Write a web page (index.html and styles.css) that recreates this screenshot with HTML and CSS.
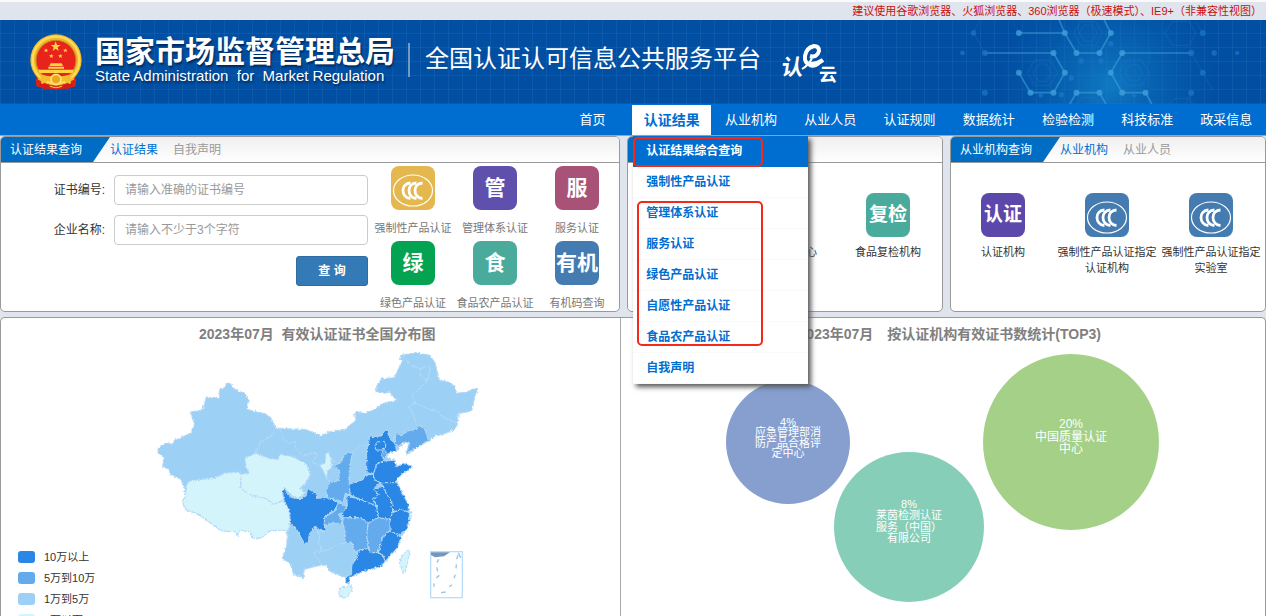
FILE: index.html
```html
<!DOCTYPE html>
<html lang="zh-CN">
<head>
<meta charset="utf-8">
<title>全国认证认可信息公共服务平台</title>
<link rel="stylesheet" href="styles.css">
</head>
<body>
<svg class="defs" aria-hidden="true">
  <symbol id="ccc" viewBox="0 0 44 44">
    <ellipse cx="22" cy="24.500" rx="19.500" ry="15.500" fill="none" stroke="#fff" stroke-width="1.200"/>
    <g fill="none" stroke="#fff" stroke-width="2.800">
      <path d="M19.500 17C9.500 17.500 9.500 31.500 19.500 32.500"/>
      <path d="M25.500 17C15.500 17.500 15.500 31.500 25.500 32.500"/>
      <path d="M31.500 17C21.500 17.500 21.500 31.500 31.500 32.500"/>
    </g>
  </symbol>
</svg>

<p class="notice">建议使用谷歌浏览器、火狐浏览器、360浏览器（极速模式）、IE9+（非兼容性视图）</p>

<header class="banner">
  <svg class="emblem" viewBox="0 0 156 168" aria-hidden="true">
    <path d="M20 118L18 155L45 166L78 158L112 166L138 155L136 118Z" fill="#d51a1c"/>
    <circle cx="78" cy="78" r="77" fill="#eeb62c"/>
    <circle cx="78" cy="78" r="70" fill="none" stroke="#ffdc57" stroke-width="7"/>
    <circle cx="78" cy="79" r="60" fill="#e8231c" stroke="#c9871c" stroke-width="3"/>
    <g fill="#ffd443">
      <path d="M77 22L81 33L92 33L83 40L86 51L77 44L68 51L71 40L62 33L73 33Z"/>
      <path d="M48 43l2 4 5 0-4 3 2 5-5-3-4 3 1-5-4-3 5 0zM106 43l2 4 5 0-4 3 2 5-5-3-4 3 1-5-4-3 5 0zM64 60l2 4 5 0-4 3 2 5-5-3-4 3 1-5-4-3 5 0zM91 60l2 4 5 0-4 3 2 5-5-3-4 3 1-5-4-3 5 0z"/>
      <path d="M62 88h33l4 8H58zM55 98h47v6H55zM24 107h108l-5 10H29z"/>
    </g>
    <path d="M26 119Q76 136 130 119L122 131L138 139L118 150L98 138L78 146L58 138L38 150L18 139L34 131Z" fill="#f3bd2d"/>
    <circle cx="78" cy="136" r="15" fill="#e9a81e" stroke="#ffe27a" stroke-width="5"/>
    <path d="M20 135L34 142L28 160L18 155ZM136 135L122 142L128 160L138 155ZM52 150L78 158L104 150L100 166H56Z" fill="#d9201c"/>
    <path d="M60 156Q78 166 96 156" fill="none" stroke="#f6c535" stroke-width="4"/>
  </svg>
  <div class="agency">
    <strong class="agency-cn">国家市场监督管理总局</strong>
    <span class="agency-en">State Administration  for  Market Regulation</span>
  </div>
  <h1 class="site-title">全国认证认可信息公共服务平台</h1>
  <svg class="cloud-logo" viewBox="0 0 56 42" aria-label="认e云">
    <text x="0" y="32" font-size="22" transform="skewX(-8) translate(3 0)">认</text>
    <text x="37" y="38" font-size="18">云</text>
    <path d="M20 26Q27 22 30 15" fill="none" stroke="#fff" stroke-width="2"/>
    <path d="M28 13Q35 15 37 8Q37 3 32 3Q24 5 23 13Q22 21 29 21Q35 21 41 17" fill="none" stroke="#fff" stroke-width="4"/>
    <path d="M25 21Q31 25 42 17Q35 27 27 24Z" fill="#fff"/>
  </svg>
  <svg class="hexagons" viewBox="340 60 920 252" aria-hidden="true">
    <defs>
      <radialGradient id="glow" cx="440" cy="255" r="330" gradientTransform="translate(350 0)" gradientUnits="userSpaceOnUse">
        <stop offset="0" stop-color="#168bd0" stop-opacity=".7"/>
        <stop offset="1" stop-color="#0864b8" stop-opacity="0"/>
      </radialGradient>
    </defs>
    <path d="M340 60h920v252H340z" fill="url(#glow)"/>
    <g fill="none" stroke="#3fa0d8" stroke-width="5" opacity=".6">
      <path d="M519 99H657M640 60L657 99L692 159H761L795 99L775 60M417 159H623L657 218L623 278H554L519 218M1036 159H829L795 218L829 278H899L918 312M672 312L692 278H761L780 312"/>
    </g>
    <g fill="none" stroke="#2a84cb" stroke-width="2" opacity=".4">
      <path d="M383 99L417 159M383 99L400 65M1071 218L1036 159M1071 218L1100 270M519 99L500 65M1036 278L1020 312M1071 99L1050 65"/>
      <path d="M684 99L705 65H749L770 99L749 136H705ZM700 99L715 75H740L754 99L740 124H715ZM544 218L567 180H612L635 218L612 256H567ZM562 218L578 192H602L617 218L602 244H578ZM820 218L842 180H887L910 218L887 256H842ZM838 218L852 195H877L890 218L877 242H852ZM957 99L980 65H1030L1050 99L1030 136H980ZM690 312L710 292H745L763 312M970 312L985 295H1025L1042 312"/>
    </g>
    <g fill="#3f9edb" opacity=".8">
      <circle cx="519" cy="99" r="9"/><circle cx="657" cy="99" r="9"/><circle cx="795" cy="99" r="9"/><circle cx="692" cy="159" r="9"/><circle cx="761" cy="159" r="9"/><circle cx="623" cy="159" r="9"/><circle cx="829" cy="159" r="9"/><circle cx="657" cy="218" r="9"/><circle cx="795" cy="218" r="9"/><circle cx="692" cy="278" r="9"/><circle cx="761" cy="278" r="9"/><circle cx="829" cy="278" r="9"/><circle cx="899" cy="278" r="9"/><circle cx="623" cy="278" r="9"/><circle cx="554" cy="278" r="9"/><circle cx="519" cy="218" r="9"/>
    </g>
    <g fill="#1d78c8" opacity=".7">
      <circle cx="383" cy="99" r="8"/><circle cx="417" cy="159" r="9"/><circle cx="350" cy="159" r="7"/><circle cx="417" cy="278" r="9"/><circle cx="1036" cy="159" r="9"/><circle cx="1071" cy="99" r="9"/><circle cx="1071" cy="218" r="9"/><circle cx="1036" cy="278" r="9"/><circle cx="1105" cy="159" r="8"/><circle cx="1174" cy="159" r="6"/><circle cx="706" cy="183" r="8"/><circle cx="765" cy="183" r="8"/><circle cx="676" cy="234" r="8"/><circle cx="795" cy="131" r="8"/><circle cx="647" cy="284" r="8"/><circle cx="585" cy="286" r="7"/><circle cx="865" cy="286" r="7"/>
    </g>
  </svg>
</header>

<nav class="nav">
  <ul class="nav-list">
    <li><a href="#">首页</a></li>
    <li class="active"><a href="#">认证结果</a>
      <div class="dropdown">
        <ul>
          <li class="selected"><a href="#">认证结果综合查询</a></li>
          <li><a href="#">强制性产品认证</a></li>
          <li><a href="#">管理体系认证</a></li>
          <li><a href="#">服务认证</a></li>
          <li><a href="#">绿色产品认证</a></li>
          <li><a href="#">自愿性产品认证</a></li>
          <li><a href="#">食品农产品认证</a></li>
          <li><a href="#">自我声明</a></li>
        </ul>
        <span class="mark mark-first"></span>
        <span class="mark mark-group"></span>
      </div>
    </li>
    <li><a href="#">从业机构</a></li>
    <li><a href="#">从业人员</a></li>
    <li><a href="#">认证规则</a></li>
    <li><a href="#">数据统计</a></li>
    <li><a href="#">检验检测</a></li>
    <li><a href="#">科技标准</a></li>
    <li><a href="#">政采信息</a></li>
  </ul>
</nav>

<main class="content">
  <div class="panels">
    <section class="panel">
      <div class="panel-head">
        <h2 class="panel-title">认证结果查询</h2>
        <a class="tab current" href="#">认证结果</a>
        <a class="tab" href="#">自我声明</a>
      </div>
      <div class="search-body">
        <form class="search-form">
          <label for="cert-no">证书编号:</label>
          <input id="cert-no" type="text" placeholder="请输入准确的证书编号">
          <label for="company">企业名称:</label>
          <input id="company" type="text" placeholder="请输入不少于3个字符">
          <button type="button">查 询</button>
        </form>
        <div class="tiles tiles-search">
          <a class="tile" href="#"><span class="tile-icon yellow"><svg><use href="#ccc"/></svg></span><span>强制性产品认证</span></a>
          <a class="tile" href="#"><span class="tile-icon purple">管</span><span>管理体系认证</span></a>
          <a class="tile" href="#"><span class="tile-icon rose">服</span><span>服务认证</span></a>
          <a class="tile" href="#"><span class="tile-icon green">绿</span><span>绿色产品认证</span></a>
          <a class="tile" href="#"><span class="tile-icon teal">食</span><span>食品农产品认证</span></a>
          <a class="tile" href="#"><span class="tile-icon blue">有机</span><span>有机码查询</span></a>
        </div>
      </div>
    </section>

    <section class="panel">
      <div class="panel-head">
        <h2 class="panel-title"></h2>
      </div>
      <div class="tiles tiles-wide">
        <a class="tile second" href="#"><span class="tile-icon blue"></span><span>质量检验中心</span></a>
        <a class="tile" href="#"><span class="tile-icon teal small">复检</span><span>食品复检机构</span></a>
      </div>
    </section>

    <section class="panel">
      <div class="panel-head">
        <h2 class="panel-title">从业机构查询</h2>
        <a class="tab current" href="#">从业机构</a>
        <a class="tab" href="#">从业人员</a>
      </div>
      <div class="tiles tiles-wide">
        <a class="tile" href="#"><span class="tile-icon violet small">认证</span><span>认证机构</span></a>
        <a class="tile" href="#"><span class="tile-icon blue"><svg><use href="#ccc"/></svg></span><span>强制性产品认证指定<br>认证机构</span></a>
        <a class="tile" href="#"><span class="tile-icon blue"><svg><use href="#ccc"/></svg></span><span>强制性产品认证指定<br>实验室</span></a>
      </div>
    </section>
  </div>

  <section class="charts">
    <div class="chart chart-map">
      <h2 class="chart-title">2023年07月&nbsp; 有效认证证书全国分布图</h2>
      <div class="map-row">
        <ul class="legend">
          <li><i class="level-4"></i>10万以上</li>
          <li><i class="level-3"></i>5万到10万</li>
          <li><i class="level-2"></i>1万到5万</li>
          <li><i class="level-1"></i>1万以下</li>
        </ul>
        <svg class="map" viewBox="0 0 990 813" role="img" aria-label="有效认证证书全国分布图">
          <defs>
            <filter id="coast" x="0" y="0" width="1" height="1">
              <feTurbulence type="fractalNoise" baseFrequency=".15" numOctaves="2" seed="4"/>
              <feDisplacementMap in="SourceGraphic" scale="10" xChannelSelector="R" yChannelSelector="G"/>
            </filter>
          </defs>
          <g filter="url(#coast)" stroke="#b5d9f8" stroke-width="3" stroke-linejoin="round">
            <path fill="#9dd0f5" d="M22 318L28 302L52 290L66 295L72 283L90 277L124 260L133 238L122 198L158 192L169 153L208 157L209 130L226 124L228 112L243 112L247 124L268 137L285 141L295 160L290 190L320 197L345 203L362 215L378 246L430 249L465 250L512 268L540 257L585 250L618 222L613 205L620 196L645 203L675 190L700 172L742 163L725 150L722 138L705 142L678 137L680 120L695 98L735 95L742 75L758 45L748 38L755 27L800 20L840 28L855 50L868 102L895 107L915 120L918 142L950 138L965 131L984 127L975 150L965 195L925 203L922 235L915 250L880 265L855 270L835 285L800 305L772 325L768 315L780 292L765 288L745 310L715 322L710 335L735 343L740 362L760 352L787 360L780 370L755 385L735 410L742 410L758 445L775 475L778 495L778 520L770 550L752 575L742 605L705 647L690 662L645 675L598 693L598 713L588 710L586 693L565 687L538 675L532 660L515 657L462 670L460 695L430 685L422 655L397 637L410 600L412 565L405 553L390 553L360 555L335 575L310 578L300 557L270 553L262 570L255 557L215 555L180 530L145 505L105 490L97 465L107 450L102 420L92 400L60 385L57 370L38 362L42 335Z"/>
            <g fill="#d4f4fc">
              <path d="M108 420L118 405L155 400L190 397L225 382L250 378L272 380L272 425L295 445L350 458L370 475L395 465L405 465L418 495L420 540L410 560L405 553L390 553L360 555L335 575L310 578L300 557L270 553L262 570L255 557L215 555L180 530L145 505L105 490L97 465L107 450Z"/>
              <path d="M272 385L297 380L287 360L285 335L320 322L360 338L385 340L390 325L430 333L470 355L480 385L465 415L448 427L468 440L445 457L425 450L405 427L397 435L402 463L370 475L350 458L295 445L272 425Z"/>
              <path d="M535 318L545 345L545 365L532 375L530 398L518 370L510 358L525 350L527 325Z"/>
              <path d="M569 728Q578 718 590 721L602 717Q612 728 600 742Q588 760 574 755Q563 745 569 728Z"/>
              <path d="M772 612L779 616L773 650L764 681L758 679L749 650Q755 624 772 612Z"/>
              <path d="M777 500L786 496L782 520L777 516Z"/>
            </g>
            <g fill="#63abec">
              <path d="M607 318L585 325L570 352L550 358L570 375L565 405L540 410L528 435L535 455L580 468L585 445L605 445L598 415L598 375Z"/>
              <path d="M565 470L588 480L590 495L565 505L578 530L570 535L550 530L525 540L522 515L555 495Z"/>
              <path d="M740 255L750 270L775 255L800 248L810 237L825 250L835 283L800 305L768 325L780 292L765 288L745 300L733 290Z"/>
              <path d="M580 515L630 515L655 530L650 570L655 610L625 612L615 620L606 590L585 590L585 555L578 530Z"/>
              <path d="M655 530L685 515L720 520L724 550L700 570L690 600L685 620L660 620L650 570Z"/>
            </g>
            <g fill="#2b87e5">
              <path d="M397 435L405 427L412 445L425 455L450 458L468 450L473 427L498 443L500 457L530 455L565 470L555 490L525 510L522 535L530 555L510 553L495 540L478 565L475 590L463 592L440 550L422 535L418 495L402 463Z"/>
              <path d="M663 262L666 272L695 270L705 252L715 255L720 280L733 290L740 315L715 322L705 335L700 345L680 355L670 385L650 380L650 320L655 290Z"/>
              <path d="M700 345L735 343L740 362L760 352L787 360L780 370L755 385L735 410L715 418L690 410L672 400L670 385L680 355Z"/>
              <path d="M645 387L670 385L672 400L690 410L674 425L685 445L670 460L680 480L630 460L600 447L598 415L640 400Z"/>
              <path d="M590 450L630 460L680 480L685 515L655 530L630 515L580 515L575 505L592 480Z"/>
              <path d="M672 430L700 420L710 445L725 465L728 500L720 520L685 515L680 480L670 460L685 445Z"/>
              <path d="M690 410L735 410L742 410L758 445L775 475L775 496L728 495L725 465L710 445L700 420Z"/>
              <path d="M728 500L755 490L778 500L778 520L770 550L745 567L720 555L720 520Z"/>
              <path d="M720 555L745 567L752 575L742 605L705 647L697 625L685 620L690 600L700 570Z"/>
              <path d="M620 635L625 612L655 608L660 620L685 620L700 630L705 647L690 662L645 675L598 693L598 713L588 710L586 693L605 685L605 660Z"/>
            </g>
            <path fill="#63abec" d="M700 307L713 325L701 337L694 328Z"/>
            <path fill="none" d="M378 246L370 265L330 290L318 322M390 248L400 280L415 292L437 287L435 305L460 330L495 318L500 330L487 350L510 358M540 345L570 352M607 318L630 300L660 295M540 410L532 395M675 300L680 288L703 286L708 300L695 312L678 312ZM758 32L770 42L778 55L810 68L835 60L840 75L832 105L785 150L795 172L775 182L790 205L800 237M810 68L812 90L832 105M795 172L840 190L870 200L885 218L920 230M495 540L510 570L505 590L515 610L490 620L505 640L515 657M530 555L500 560M505 620L530 612L555 600L585 590"/>
          </g>
          <rect x="842" y="617" width="95" height="138" fill="#fff" stroke="#b9defb" stroke-width="4"/>
          <path d="M843 619H900L882 631L855 634L843 627Z" fill="#7199bd"/>
          <path d="M866 640l-5 10M860 664l3 12M868 688l-9 8M851 712l2 10M873 740l14-2M898 722l8-6M912 697l4-11M918 667l1-12M920 640l4-12M925 620l7 15" fill="none" stroke="#98c4ea" stroke-width="4"/>
        </svg>
      </div>
    </div>
    <div class="chart chart-bubbles">
      <h2 class="chart-title">2023年07月&emsp;按认证机构有效证书数统计(TOP3)</h2>
      <svg class="bubbles" viewBox="0 0 645 271" role="img" aria-label="按认证机构有效证书数统计">
        <circle cx="167" cy="96" r="62" fill="#869fcf"/>
        <circle cx="288" cy="181" r="75" fill="#87ceb8"/>
        <circle cx="450" cy="96" r="88" fill="#a4d088"/>
        <g font-size="11">
          <text x="167" y="80">4%</text><text x="167" y="90">应急管理部消</text><text x="167" y="101">防产品合格评</text><text x="167" y="111">定中心</text>
        </g>
        <g font-size="11">
          <text x="288" y="162">8%</text><text x="288" y="173">莱茵检测认证</text><text x="288" y="185">服务（中国）</text><text x="288" y="196">有限公司</text>
        </g>
        <g font-size="12">
          <text x="450" y="82">20%</text><text x="450" y="95">中国质量认证</text><text x="450" y="107">中心</text>
        </g>
      </svg>
    </div>
  </section>
</main>
</body>
</html>
```
FILE: styles.css
```css
* { box-sizing: border-box; }

body {
  margin: 0;
  height: 100vh;
  display: flex;
  flex-direction: column;
  overflow: hidden;
  background: #e0e4ec;
  color: #333;
  font: 12px/16px "Liberation Sans", "Noto Sans CJK SC", sans-serif;
}

a { color: inherit; text-decoration: none; }
ul { list-style: none; margin: 0; padding: 0; }
h1, h2, p { margin: 0; }
.defs { position: absolute; width: 0; height: 0; }

.notice {
  flex: none;
  height: 20px;
  padding: 0 4px;
  border-top: 2px solid #fafafa;
  color: #c8100f;
  font-size: 11px;
  line-height: 19px;
  text-align: right;
}

/* Banner */
.banner {
  position: relative;
  flex: none;
  display: flex;
  height: 84px;
  padding: 14px 30px 0;
  color: #fff;
  background:
    repeating-linear-gradient(90deg, #2a70bc48 0 1px, transparent 1px 14px),
    repeating-linear-gradient(0deg, #2a70bc48 0 1px, transparent 1px 14px),
    #014fa2;
}
.emblem { flex: none; width: 52px; height: 56px; margin-right: 13px; }
.agency { flex: none; width: 300px; display: flex; flex-direction: column; text-shadow: 1px 2px 2px #00285c; }
.agency-cn { padding-top: 2px; font-size: 30px; line-height: 32px; }
.agency-en { font-size: 15px; line-height: 16px; white-space: pre; }
.site-title {
  flex: none;
  height: 34px;
  margin: 9px 21px 0 13px;
  padding-left: 15px;
  border-left: 2px solid #6f9aca;
  font-size: 24px;
  font-weight: 400;
  line-height: 32px;
}
.cloud-logo {
  flex: none;
  width: 56px;
  height: 42px;
  margin-top: 9px;
  overflow: visible;
  fill: #fff;
  font-family: "Noto Sans CJK SC", sans-serif;
  font-weight: 700;
}
.hexagons { position: absolute; right: 0; top: 0; width: 307px; height: 84px; }

/* Navigation */
.nav {
  flex: none;
  display: flex;
  justify-content: flex-end;
  height: 32px;
  background: #006dd0;
  border-bottom: 1px solid #7fabdb;
}
.nav-list {
  display: grid;
  grid-template-columns: repeat(9, 1fr);
  width: 713px;
  color: #fff;
  font-size: 13px;
  line-height: 31px;
  text-align: center;
}
.nav-list > li { position: relative; }
.nav-list > li > a { display: block; }
.nav-list .active > a {
  margin-top: 1px;
  background: #fff;
  color: #006dd0;
  font-size: 14px;
  font-weight: 700;
  line-height: 30px;
}
.dropdown {
  position: absolute;
  z-index: 2;
  top: 32px;
  left: 1px;
  width: 175px;
  background: #fff;
  box-shadow: 3px 3px 5px #555;
  color: #006dd0;
  font-size: 12px;
  font-weight: 700;
  text-align: left;
}
.dropdown li { border-bottom: 1px solid #fafafa; }
.dropdown li a { display: block; padding-left: 13px; line-height: 30px; }
.dropdown .selected { background: #006dd0; border-color: #006dd0; color: #fff; }
.mark { position: absolute; border: 2px solid #f22a17; border-radius: 5px; }
.mark-first { left: 0; top: 1px; width: 130px; height: 30px; }
.mark-group { left: 4px; top: 65px; width: 126px; height: 145px; }

/* Panels */
.content { flex: 1; min-height: 0; display: flex; flex-direction: column; gap: 5px; }
.panels { flex: none; display: grid; grid-template-columns: 620fr 316fr 316fr; gap: 7px; }
.panel {
  min-width: 0;
  min-height: 175px;
  overflow: hidden;
  border: 1px solid #999;
  border-radius: 5px;
  background: #fff;
}
.panel-head {
  display: flex;
  align-items: center;
  height: 26px;
  border-bottom: 1px solid #999;
  background: linear-gradient(#efefef, #fff);
}
.panel-title {
  align-self: stretch;
  padding: 0 28px 0 9px;
  background: #006dc5;
  clip-path: polygon(0 0, 100% 0, calc(100% - 17px) 100%, 0 100%);
  color: #fff;
  font-size: 12px;
  font-weight: 400;
  line-height: 26px;
}
.tab { margin-right: 15px; color: #999; line-height: 26px; }
.tab.current { color: #0070d0; }
.search-body { display: flex; justify-content: space-between; }
.search-form {
  flex: 1;
  display: grid;
  grid-template-columns: 104px 1fr;
  align-content: start;
  align-items: center;
  gap: 10px 9px;
  padding: 12px 4px 0 0;
  text-align: right;
}
.search-form input {
  width: 100%;
  height: 30px;
  padding: 0 10px;
  border: 1px solid #ccc;
  border-radius: 4px;
  background: #fff;
  font: inherit;
}
.search-form input::placeholder { color: #999; opacity: 1; }
.search-form button {
  grid-column: 2;
  justify-self: end;
  width: 72px;
  height: 30px;
  margin-top: 1px;
  border: 1px solid #2e6da4;
  border-radius: 3px;
  background: #337ab7;
  color: #fff;
  font: inherit;
  font-weight: 700;
}
.tiles { display: grid; grid-template-columns: repeat(3, 1fr); }
.tiles-search { flex: none; width: 246px; height: 148px; padding-top: 3px; margin-right: 1px; row-gap: 5px; color: #777; }
.tiles-search .tile { gap: 10px; }
.tiles-wide { padding: 30px 2px 0 0; color: #333; }
.tiles-wide .tile { gap: 7px; }
.tile {
  display: flex;
  flex-direction: column;
  align-items: center;
  font-size: 11px;
  line-height: 16px;
  text-align: center;
  white-space: nowrap;
}
.tile.second { grid-column-start: 2; }
.tile-icon {
  width: 44px;
  height: 44px;
  border-radius: 8px;
  color: #fff;
  font-size: 21px;
  font-weight: 700;
  line-height: 44px;
}
.tile-icon.small { font-size: 19px; }
.tile-icon svg { display: block; width: 44px; height: 44px; }
.yellow { background: #e4b84e; }
.purple { background: #6050ae; }
.violet { background: #5c48aa; }
.rose { background: #a95278; }
.green { background: #04a352; }
.teal { background: #4aab9c; }
.blue { background: #447bb0; }

/* Charts */
.charts {
  flex: 1;
  min-height: 0;
  display: grid;
  grid-template-columns: 620fr 645fr;
  overflow: hidden;
  border: 1px solid #999;
  border-bottom: 0;
  border-radius: 5px 5px 0 0;
  background: #fff;
}
.chart { min-width: 0; padding-top: 4px; }
.chart-map { border-right: 1px solid #aaa; }
.chart-title {
  padding-left: 14px;
  color: #808080;
  font-size: 14px;
  line-height: 24px;
  text-align: center;
}
.map-row { display: flex; gap: 39px; }
.legend { flex: none; width: 110px; padding: 200px 0 0 17px; color: #333; font-size: 11px; }
.legend li { display: flex; align-items: center; gap: 9px; height: 21px; }
.legend i { width: 17px; height: 12px; border-radius: 3px; }
.level-4 { background: #2b87e5; }
.level-3 { background: #63abec; }
.level-2 { background: #9dd0f5; }
.level-1 { background: #d4f4fc; }
.map { flex: none; width: 330px; height: 271px; }
.bubbles { display: block; width: 645px; height: 271px; fill: #fff; text-anchor: middle; }
```
